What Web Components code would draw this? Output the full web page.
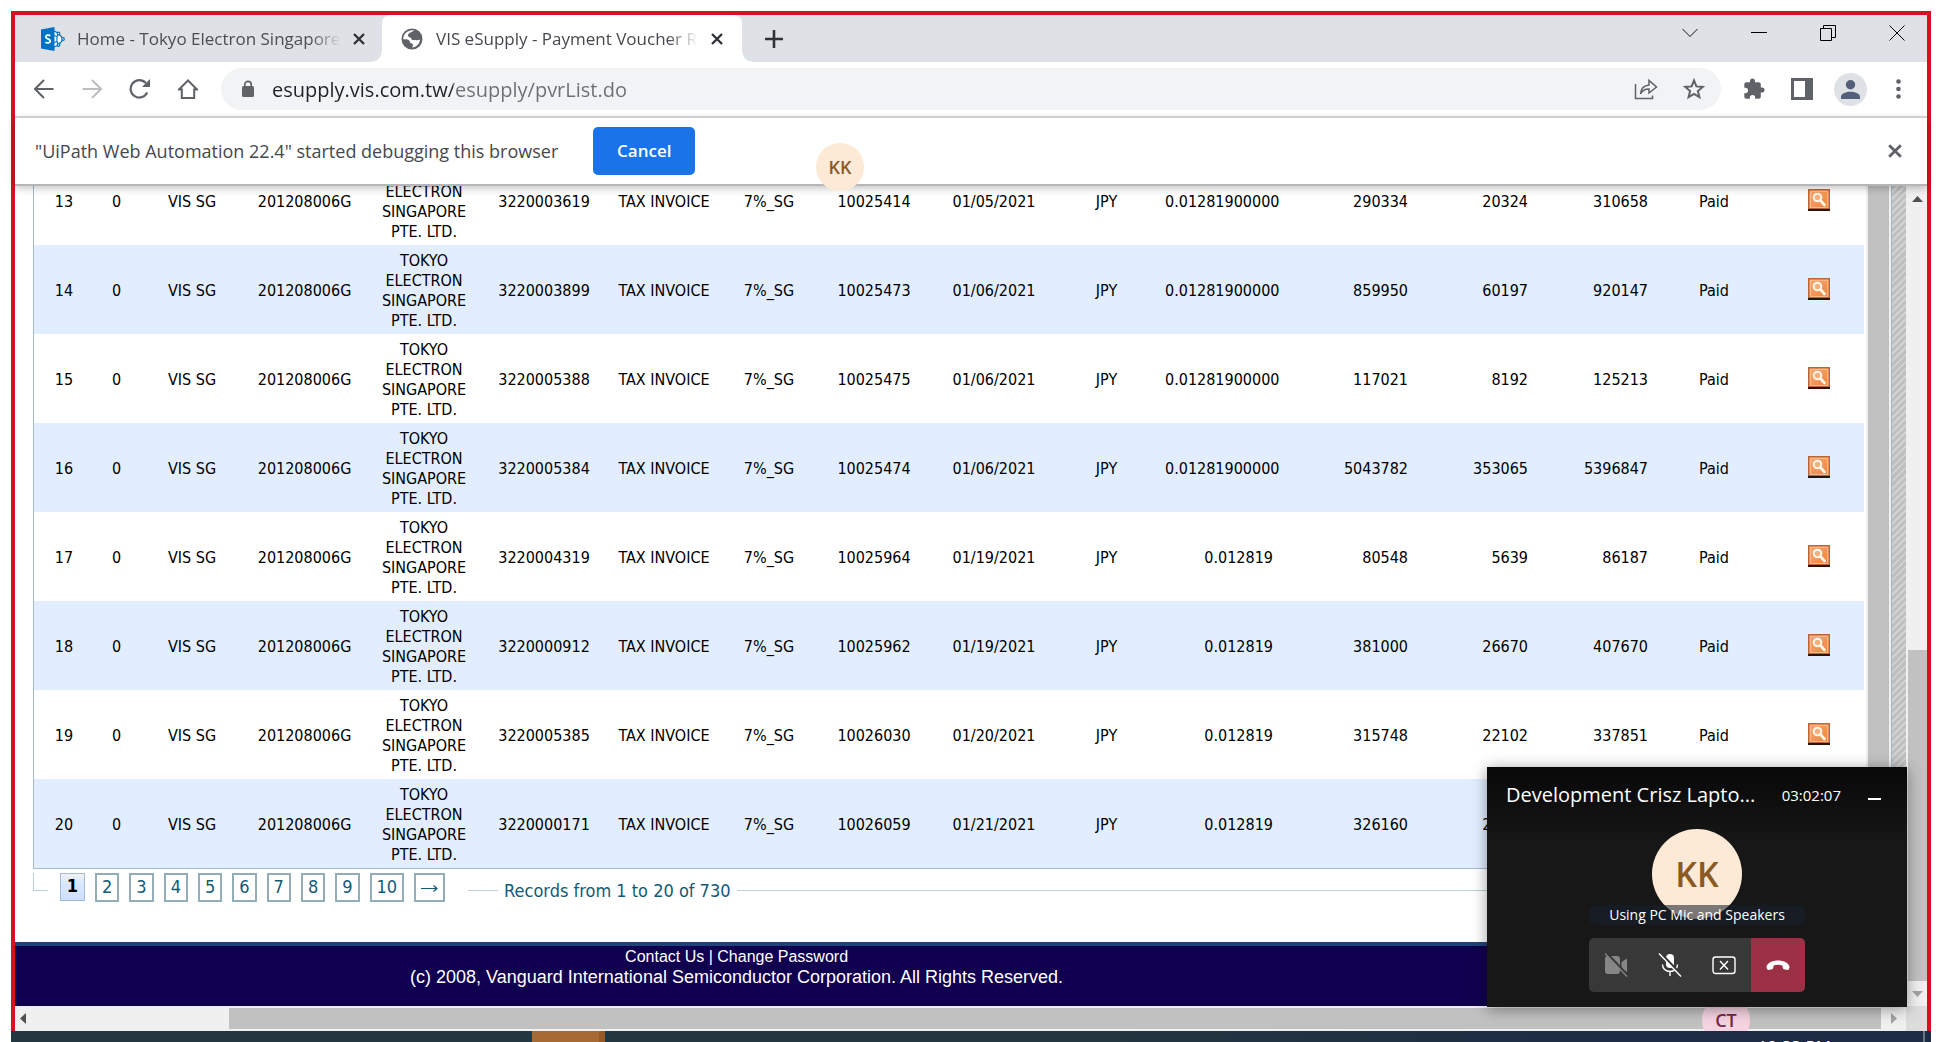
<!DOCTYPE html>
<html lang="en">
<head>
<meta charset="utf-8">
<title>VIS eSupply - Payment Voucher</title>
<style>
  body { margin: 0; height: 100vh; overflow: hidden; position: relative; display: flex; flex-direction: column; background: #fff; color: #000;
    font-family: "Open Sans", "Noto Sans", sans-serif; --grid-font: "DejaVu Sans Condensed", "DejaVu Sans", sans-serif; }
  browser-frame { flex: 1; min-height: 0; }
  .caller { position: absolute; left: 816px; top: 143px; }
  .peer { position: absolute; right: 192px; bottom: -2px; }
  call-window { position: absolute; right: 35px; bottom: 35px; }
</style>
</head>
<body>
<browser-frame>
  <tab-strip>
    <browser-tab icon="sharepoint">Home - Tokyo Electron Singapore</browser-tab>
    <browser-tab icon="globe" active>VIS eSupply - Payment Voucher R</browser-tab>
  </tab-strip>
  <tool-bar></tool-bar>
  <info-bar>"UiPath Web Automation 22.4" started debugging this browser</info-bar>
  <page-view>
    <voucher-table></voucher-table>
    <record-pager>Records from 1 to 20 of 730</record-pager>
    <page-footer slot="footer"></page-footer>
  </page-view>
  <h-scroll></h-scroll>
</browser-frame>
<user-avatar class="caller">KK</user-avatar>
<user-avatar class="peer" tone="pink">CT</user-avatar>
<call-window>Development Crisz Lapto...</call-window>
<task-bar>12:33 PM</task-bar>

<script>
const define = (name, html, setup) => customElements.define(name, class extends HTMLElement {
  constructor() {
    super();
    const root = this.attachShadow({ mode: "open" });
    root.innerHTML = "<style>:host,*{box-sizing:border-box}button{font:inherit;color:inherit;border:0;padding:0;margin:0;background:none;display:flex;align-items:center;justify-content:center}svg{display:block}</style>" + html;
    if (setup) setup(root, this);
  }
});

const CLOSE = '<svg width="12" height="12" viewBox="0 0 12 12" stroke="currentColor" stroke-width="2.4" fill="none"><path d="M1 1l10 10M11 1L1 11"/></svg>';

const TAB_ICONS = {
  sharepoint: `<svg width="24" height="24" viewBox="0 0 24 24"><g fill="#fff" stroke="#0072c6" stroke-width="1.2"><path d="M13 4l4 2 5.500 6-5 6-4.500 2"/><path d="M13 8.500l3 1v5l-3 1M16 9.500l2-3M16 14.500l1.500 3"/><circle cx="17.500" cy="6.500" r="1.300"/><circle cx="22" cy="12" r="1.300"/><circle cx="17.500" cy="18" r="1.300"/></g><path fill="#0072c6" d="M0 2.500L13.500 0v24L0 21.500z"/><path d="M9.300 8.800C7.500 7.500 4.800 8 4.800 9.900c0 2.300 4.400 1.700 4.400 4.100 0 2-2.900 2.400-4.800 1.200" fill="none" stroke="#fff" stroke-width="1.800"/></svg>`,
  globe: `<svg width="22" height="22" viewBox="0 0 22 22"><circle cx="11" cy="11" r="10.500" fill="#5f6368"/><path fill="#fff" d="M13.500 2.500C11 4 7.500 4.600 7 7.200c-.3 1.800 1.600 1.900 2.600 2.500 1 .7.600 2 2 2.300 1.500.3 2.400-.2 3.600.2 1.600.5 2.600-.6 3.900-.4a9 9 0 0 1-8.300 7.800c1-1.200 1.600-2.200 1-3.300-.6-1-2.400-.8-2.900-2-.4-1-.2-1.700-1.300-2.300-1.300-.7-3.300-.3-5.400-.7A9 9 0 0 1 13.500 2.500z"/></svg>`
};

define("browser-frame", `<style>
  :host { display: flex; flex-direction: column; margin: 11px 11px 0; border: 4px solid #d91023; border-bottom: 0; background: #fff; }
  ::slotted(page-view) { flex: 1; min-height: 0; }
</style><slot></slot>`);

define("browser-tab", `<style>
  :host { display: flex; align-items: center; gap: 13px; width: 360px; height: 47px; padding: 0 19px; font-size: 17px; line-height: 24px; color: #45484d; position: relative; }
  :host([icon=sharepoint]) { width: 367px; padding: 0 17px 0 26px; gap: 12px; color: #4b4e53; }
  :host([active]) { background: #fff; border-radius: 8px 8px 0 0; }
  :host([active])::before, :host([active])::after { content: ""; position: absolute; bottom: 0; width: 10px; height: 10px; }
  :host([active])::before { left: -10px; background: radial-gradient(circle at 0 0, transparent 9px, #fff 10px); }
  :host([active])::after { right: -10px; background: radial-gradient(circle at 100% 0, transparent 9px, #fff 10px); }
  .title { flex: 1; min-width: 0; overflow: hidden; white-space: nowrap; -webkit-mask-image: linear-gradient(90deg, #000 calc(100% - 30px), transparent); mask-image: linear-gradient(90deg, #000 calc(100% - 30px), transparent); }
  button { color: #303338; }
</style><span class="icon"></span><span class="title"><slot></slot></span><button aria-label="Close tab">${CLOSE}</button>`,
(root, host) => { root.querySelector(".icon").innerHTML = TAB_ICONS[host.getAttribute("icon")] || ""; });

define("tab-strip", `<style>
  :host { display: flex; align-items: center; height: 47px; background: #dee1e6; color: #000; }
  .new { width: 64px; color: #303338; }
  .controls { display: flex; margin: 0 -4px 0 auto; align-self: flex-start; height: 35px; }
  .controls button { width: 69px; }
</style><slot></slot><button class="new" aria-label="New tab"><svg width="18" height="18" viewBox="0 0 18 18" stroke="currentColor" stroke-width="2.600"><path d="M9 0v18M0 9h18"/></svg></button>
<div class="controls">
  <button aria-label="Search tabs"><svg width="16" height="10" viewBox="0 0 16 10" fill="none" stroke="#111"><path d="M.5 1L8 8.500 15.500 1"/></svg></button>
  <button aria-label="Minimize"><svg width="16" height="1" viewBox="0 0 16 1"><path fill="#000" d="M0 0h16v1H0z"/></svg></button>
  <button aria-label="Restore"><svg width="16" height="16" viewBox="0 0 16 16" fill="none" stroke="#000"><path d="M.5 3.500h11v12H.5zM3.500 3.500v-3h12v12h-4"/></svg></button>
  <button aria-label="Close"><svg width="16" height="16" viewBox="0 0 16 16" stroke="#000"><path d="M.5.5l15 15M15.500.5l-15 15"/></svg></button>
</div>`);

define("tool-bar", `<style>
  :host { display: flex; align-items: center; height: 56px; padding: 0 5px; border-bottom: 2px solid #dadce0; color: #5f6368; background: #fff; }
  button { width: 48px; height: 42px; flex: none; }
  .fwd { color: #bcbec1; }
  .address { display: flex; align-items: center; flex: 1; height: 42px; border-radius: 21px; background: #f1f3f4; margin: 0 9px; padding: 0 3px 0 20px; }
  .lock { margin-right: 17px; }
  input { flex: 1; min-width: 0; height: 32px; border: 0; outline: 0; padding: 0; font: 20px/28px "Open Sans", "Noto Sans", sans-serif; color: #202124;
    background: linear-gradient(90deg, #202124 0 181px, #6b6f74 181px); -webkit-background-clip: text; background-clip: text; -webkit-text-fill-color: transparent; }
  .me span { width: 33px; height: 33px; border-radius: 50%; background: #dee1e6; display: grid; place-items: center; }
</style>
<button aria-label="Back"><svg width="20" height="20" viewBox="0 0 20 20" fill="none" stroke="currentColor" stroke-width="2"><path d="M19.500 10H1.500M10 1L1 10l9 9"/></svg></button>
<button aria-label="Forward" class="fwd"><svg width="20" height="20" viewBox="0 0 20 20" fill="none" stroke="currentColor" stroke-width="2"><path d="M.5 10h18M10 1l9 9-9 9"/></svg></button>
<button aria-label="Reload"><svg width="22" height="20" viewBox="0 0 22 20"><path d="M18.200 13.500A8.700 8.700 0 1 1 16.800 4" fill="none" stroke="currentColor" stroke-width="2.200"/><path fill="currentColor" d="M21 0v8h-8z"/></svg></button>
<button aria-label="Home"><svg width="20" height="20" viewBox="0 0 20 20" fill="none" stroke="currentColor" stroke-width="2"><path d="M1 10.500L10 1.500l9 9h-2.800V19H3.800v-8.500z"/></svg></button>
<div class="address">
  <svg class="lock" width="14" height="18" viewBox="0 0 14 18"><rect x="1" y="6" width="12" height="11" rx="1.500" fill="#5f6368"/><path d="M3.800 7V4.500a3.200 3.200 0 0 1 6.400 0V7" fill="none" stroke="#5f6368" stroke-width="1.700"/></svg>
  <input type="text" aria-label="Address" value="esupply.vis.com.tw/esupply/pvrList.do">
  <button aria-label="Share"><svg width="24" height="22" viewBox="0 0 24 22" fill="none" stroke="currentColor" stroke-width="1.500"><path d="M1.500 6v14.500H18.500V17.500"/><path d="M6.500 16C7 10.500 10 7.500 15 7V2.500l7.500 6.500L15 15v-4c-4-.2-6.500 1.500-8.500 5z"/></svg></button>
  <button aria-label="Bookmark"><svg width="22" height="22" viewBox="0 0 22 22" fill="none" stroke="currentColor" stroke-width="2"><path d="M11 2.500l2.400 5.900 6.400.5-4.900 4.100 1.500 6.200L11 15.900l-5.400 3.300L7.100 13 2.200 8.900l6.400-.5z"/></svg></button>
</div>
<button aria-label="Extensions"><svg width="22" height="22" viewBox="0 0 22 22" fill="currentColor"><path d="M19 9.500H17.800V6.200a2 2 0 0 0-2-2H12V3a2.500 2.500 0 0 0-5 0v1.200H3.300a2 2 0 0 0-2 2V9.800h1a2.700 2.700 0 0 1 0 5.400h-1v3.600a2 2 0 0 0 2 2H6.800v-1a2.700 2.700 0 0 1 5.400 0v1h3.600a2 2 0 0 0 2-2v-4.300H19a2.500 2.500 0 0 0 0-5z"/></svg></button>
<button aria-label="Side panel"><svg width="22" height="22" viewBox="0 0 22 22"><path fill="currentColor" fill-rule="evenodd" d="M0 0h22v22H0zM3 3v16h11V3z"/></svg></button>
<button aria-label="Profile" class="me"><span><svg width="19" height="19" viewBox="0 0 19 19" fill="#54607a"><circle cx="9.500" cy="4.700" r="4.700"/><path d="M0 19v-2.500c0-3 5.500-4.800 9.500-4.800s9.500 1.800 9.500 4.800V19z"/></svg></span></button>
<button aria-label="Menu"><svg width="5" height="20" viewBox="0 0 5 20" fill="currentColor"><circle cx="2.500" cy="2.500" r="2.300"/><circle cx="2.500" cy="10" r="2.300"/><circle cx="2.500" cy="17.500" r="2.300"/></svg></button>`);

define("info-bar", `<style>
  :host { display: flex; align-items: center; gap: 35px; height: 68px; padding: 0 25px 0 20px; border-bottom: 2px solid #b4b6b9; background: #fff; box-shadow: 0 2px 8px rgba(0,0,0,.25); position: relative; z-index: 1; font-size: 18px; line-height: 26px; color: #45484d; }
  .cancel { width: 102px; height: 48px; border-radius: 5px; background: #1a73e8; color: #fff; font-size: 17px; font-weight: 600; }
  .close { margin-left: auto; color: #5f6368; }
  .close svg { width: 14px; height: 14px; }
</style><span><slot></slot></span><button class="cancel">Cancel</button><button class="close" aria-label="Dismiss">${CLOSE}</button>`);

define("page-view", `<style>
  :host { display: flex; overflow: hidden; }
  main { flex: 1; min-width: 0; display: flex; flex-direction: column; }
  .body { flex: 1; min-height: 0; display: flex; }
  .scrolled { flex: 1; min-width: 0; display: flex; flex-direction: column; justify-content: flex-end; overflow: hidden; padding: 0 2px 0 18px; }
  .inner { width: 25px; background: #c1c1c1; border: solid #f0f0f0; border-width: 0 2px; }
  .hatch { width: 15px; border-left: 1px solid #a3b8c8; background: repeating-linear-gradient(135deg, #bfbfbf 0 3px, #d2d2d2 3px 5px); }
  .bar { width: 21px; padding-left: 2px; background: #f0f0f0; display: flex; flex-direction: column; align-items: center; }
  .up, .down { height: 25px; width: 19px; display: flex; align-items: center; justify-content: center; }
  .space { flex: 439; }
  .thumb { flex: 331; width: 19px; background: #c1c1c1; }
</style>
<main><div class="body"><div class="scrolled"><slot></slot></div><div class="inner"></div><div class="hatch"></div></div><slot name="footer"></slot></main>
<div class="bar">
  <div class="up"><svg width="11" height="6" viewBox="0 0 11 6"><path fill="#505050" d="M0 6L5.500 0 11 6z"/></svg></div>
  <div class="space"></div><div class="thumb"></div>
  <div class="down"><svg width="11" height="6" viewBox="0 0 11 6"><path fill="#a3a3a3" d="M0 0l5.500 6L11 0z"/></svg></div>
</div>`);

const VENDOR = "TOKYO ELECTRON SINGAPORE PTE. LTD.";
const ROWS = [
  [13, "3220003619", "10025414", "01/05/2021", "0.01281900000", 290334, 20324, 310658, "ELECTRON SINGAPORE PTE. LTD."],
  [14, "3220003899", "10025473", "01/06/2021", "0.01281900000", 859950, 60197, 920147],
  [15, "3220005388", "10025475", "01/06/2021", "0.01281900000", 117021, 8192, 125213],
  [16, "3220005384", "10025474", "01/06/2021", "0.01281900000", 5043782, 353065, 5396847],
  [17, "3220004319", "10025964", "01/19/2021", "0.012819", 80548, 5639, 86187],
  [18, "3220000912", "10025962", "01/19/2021", "0.012819", 381000, 26670, 407670],
  [19, "3220005385", "10026030", "01/20/2021", "0.012819", 315748, 22102, 337851],
  [20, "3220000171", "10026059", "01/21/2021", "0.012819", 326160, 22831, 348991]
];
const WIDTHS = [60, 45, 106, 119, 120, 120, 120, 90, 120, 120, 105, 120, 135, 120, 120, 120, 90];
const VIEW = `<svg width="22" height="23" viewBox="0 0 22 23"><defs><linearGradient id="g" x1="0" y1="0" x2="1" y2="1"><stop offset="0" stop-color="#f6a56c"/><stop offset=".5" stop-color="#f3965a"/><stop offset="1" stop-color="#ee8444"/></linearGradient></defs><path fill="#2c1408" d="M0 1h22v21H0z"/><path fill="#bd6434" d="M0 0h22v20H0z"/><path fill="#fbb98a" d="M1.500 1.500h19v17.500h-19z"/><path fill="url(#g)" d="M3 3h16v15H3z"/><circle cx="9.500" cy="8.500" r="3.800" fill="#f7b07c" stroke="#fff6ea" stroke-width="2"/><path d="M12.500 11.500l4 4.500" stroke="#fff6ea" stroke-width="2.800" stroke-linecap="round"/></svg>`;

define("voucher-table", `<style>
  :host { display: block; flex: none; border: solid #a3bbd0; border-width: 0 0 1px 1px; font-family: var(--grid-font); font-size: 16px; line-height: 20px; color: #000; }
  table { width: 100%; table-layout: fixed; border-collapse: collapse; }
  td { height: 89px; padding: 6px 6px 3px; text-align: center; white-space: nowrap; }
  td.name { white-space: normal; padding: 6px 12px 3px; vertical-align: bottom; }
  td.num { text-align: right; }
  tr:nth-child(even) { background: #e2eeff; }
  button { margin: 0 auto 4px; }
</style><table><colgroup></colgroup><tbody></tbody></table>`, root => {
  const total = WIDTHS.reduce((a, b) => a + b);
  root.querySelector("colgroup").innerHTML = WIDTHS.map(w => `<col style="width:${w / total * 100}%">`).join("");
  root.querySelector("tbody").innerHTML = ROWS.map(([n, po, doc, date, rate, net, tax, sum, vendor = VENDOR]) => `<tr>
    <td>${n}</td><td>0</td><td>VIS SG</td><td>201208006G</td><td class="name">${vendor}</td>
    <td>${po}</td><td>TAX INVOICE</td><td>7%_SG</td><td>${doc}</td><td>${date}</td><td>JPY</td>
    <td class="num">${rate}</td><td class="num">${net}</td><td class="num">${tax}</td><td class="num">${sum}</td>
    <td>Paid</td><td><button aria-label="View voucher ${n}">${VIEW}</button></td></tr>`).join("");
});

define("record-pager", `<style>
  :host { display: flex; align-items: flex-start; flex: none; height: 73px; padding-top: 4px; font-family: var(--grid-font); font-size: 18px; line-height: 24px; color: #125a78; }
  .corner { width: 15px; height: 18px; border: solid #bdd0d8; border-width: 0 0 1px 1px; margin-right: 12px; }
  nav { display: flex; gap: 10px; }
  a { display: block; height: 29px; padding: 0 5px; border: 2px solid #93adb9; color: inherit; text-decoration: none; }
  a.on { width: 25px; height: 28px; padding: 0; text-align: center; border: 1px solid #a3bbdb; background: linear-gradient(#f4f1ee, #dce9ff 30%, #cbdfff); color: #000; font-weight: bold; }
  a svg { margin-top: 9px; }
  i { height: 18px; border-bottom: 1px solid #bdd0d8; width: 30px; margin-left: 23px; }
  i.rest { flex: 1; margin: 0; }
  .count { padding: 6px 6px 0; }
</style><span class="corner"></span><nav aria-label="Pages"><a href="#1" class="on">1</a>${[2,3,4,5,6,7,8,9,10].map(n => `<a href="#${n}">${n}</a>`).join("")}<a href="#next" aria-label="Next page"><svg width="17" height="9" viewBox="0 0 17 9" fill="none" stroke="currentColor" stroke-width="1.200"><path d="M0 4.500h16M12.500 1.500l3.500 3-3.500 3"/></svg></a></nav><i></i><span class="count"><slot></slot></span><i class="rest"></i>`);

define("page-footer", `<style>
  :host { display: block; height: 64px; flex: none; border-top: 4px solid #22437a; background: #10004f; color: #fff; font-family: "Liberation Sans", sans-serif; }
  div { width: 76%; padding-left: 6px; text-align: center; font-size: 18px; line-height: 21px; }
  .links { font-size: 16px; }
  a { color: inherit; text-decoration: none; }
</style><div class="links"><a href="#contact">Contact Us</a> | <a href="#password">Change Password</a></div><div>(c) 2008, Vanguard International Semiconductor Corporation. All Rights Reserved.</div>`);

define("h-scroll", `<style>
  :host { display: flex; align-items: center; height: 25px; background: #f0f0f0; }
  .left { padding-left: 5px; flex: 209; }
  .thumb { flex: 1652; height: 21px; background: #c1c1c1; }
  .right { width: 25px; display: flex; justify-content: center; }
  .corner { width: 21px; height: 25px; background: #dcdcdc; }
</style><div class="left"><svg width="6" height="11" viewBox="0 0 6 11"><path fill="#505050" d="M6 0L0 5.500 6 11z"/></svg></div><div class="thumb"></div><div class="right"><svg width="6" height="11" viewBox="0 0 6 11"><path fill="#a3a3a3" d="M0 0l6 5.500L0 11z"/></svg></div><div class="corner"></div>`);

define("user-avatar", `<style>
  :host { display: grid; place-items: center; width: 48px; height: 48px; border-radius: 50%; background: #fce9d6; color: #8a5a22; font-size: 18px; line-height: 24px; font-weight: 600; z-index: 2; }
  :host([tone=pink]) { background: #f5d3e0; color: #772745; }
  :host([size=large]) { width: 90px; height: 90px; font-size: 34px; line-height: 44px; }
</style><span><slot></slot></span>`);

define("call-window", `<style>
  :host { display: flex; flex-direction: column; width: 420px; height: 240px; background: linear-gradient(#080808, #171717 32%); color: #fff; box-shadow: 0 2px 14px rgba(0,0,0,.4); z-index: 3; }
  header { display: flex; align-items: center; height: 56px; padding: 0 26px 0 19px; }
  .title { font-size: 20px; line-height: 28px; flex: 1; white-space: nowrap; }
  .time { font-size: 15px; line-height: 28px; margin-right: 27px; }
  .min { padding-top: 8px; }
  .min span { width: 13px; height: 2px; background: #fff; }
  .stage { display: flex; flex-direction: column; align-items: center; padding-top: 6px; }
  .note { width: 216px; height: 20px; margin-top: -14px; border-radius: 6px; background: rgba(24,31,45,.56); font-size: 14px; line-height: 20px; text-align: center; z-index: 3; }
  .controls { display: flex; margin: 13px auto 0; border-radius: 5px; overflow: hidden; background: #383838; }
  .controls button { width: 54px; height: 54px; }
  .controls .end { background: #9c3044; }
</style>
<header><span class="title"><slot></slot></span><span class="time">03:02:07</span><button class="min" aria-label="Minimize"><span></span></button></header>
<div class="stage"><user-avatar size="large">KK</user-avatar><div class="note">Using PC Mic and Speakers</div></div>
<div class="controls">
  <button aria-label="Camera off"><svg width="24" height="24" viewBox="0 0 24 24"><path fill="#868686" d="M4 3h9a3 3 0 0 1 3 3v12a3 3 0 0 1-3 3H4a3 3 0 0 1-3-3V6a3 3 0 0 1 3-3zM17.500 9L23 5.500v14L17.500 15.500z"/><path d="M2.500 0l22 23" stroke="#383838" stroke-width="2.500"/><path d="M1 .5l22 23" stroke="#868686" stroke-width="1.300"/></svg></button>
  <button aria-label="Microphone muted"><svg width="24" height="24" viewBox="0 0 24 24" fill="none" stroke="#fff" stroke-width="1.400"><rect x="8" y="1" width="8" height="14" rx="4" fill="#fff" stroke="none"/><path d="M4.500 11.500c0 4 3.200 7 7.500 7s7.500-3 7.500-7M12 18.500V23"/><path d="M2.500 0l21 22" stroke="#383838" stroke-width="2.500"/><path d="M1 .5l22 23"/></svg></button>
  <button aria-label="Stop sharing"><svg width="24" height="24" viewBox="0 0 24 24" fill="none" stroke="#fff" stroke-width="1.400"><rect x="1" y="4" width="22" height="16.500" rx="2.500"/><path d="M8 8l8 8.500M16 8l-8 8.500"/></svg></button>
  <button class="end" aria-label="Hang up"><svg width="24" height="24" viewBox="0 0 24 24" fill="#fff"><path d="M12 7.500c5.500 0 10 2.200 11.300 5.500.4 1.200.1 2.500-.7 3.400-.6.700-1.500.6-2.300.4l-2.300-.6c-.8-.2-1.200-.8-1.300-1.600l-.3-2.200c-2.800-1-6-1-8.800 0l-.3 2.200c-.1.800-.5 1.400-1.300 1.600l-2.300.6c-.8.2-1.700.3-2.300-.4-.8-.9-1.100-2.200-.7-3.400C2 9.700 6.500 7.500 12 7.500z"/></svg></button>
</div>`);

define("task-bar", `<style>
  :host { display: flex; height: 11px; margin: 0 11px; overflow: hidden; flex: none; z-index: 3; background: linear-gradient(90deg, #22373f 55%, #1d2b44 85%); color: #fff; }
  .app { width: 73px; margin-left: 521px; background: #a66a35; border-right: 6px solid #985b28; }
  .clock { margin-left: auto; padding: 4px 92px 0 0; font-size: 17px; line-height: 24px; }
  .edge { width: 2px; margin-right: 6px; background: #6a7484; }
</style><div class="app"></div><div class="clock"><slot></slot></div><div class="edge"></div>`);
</script>
</body>
</html>
